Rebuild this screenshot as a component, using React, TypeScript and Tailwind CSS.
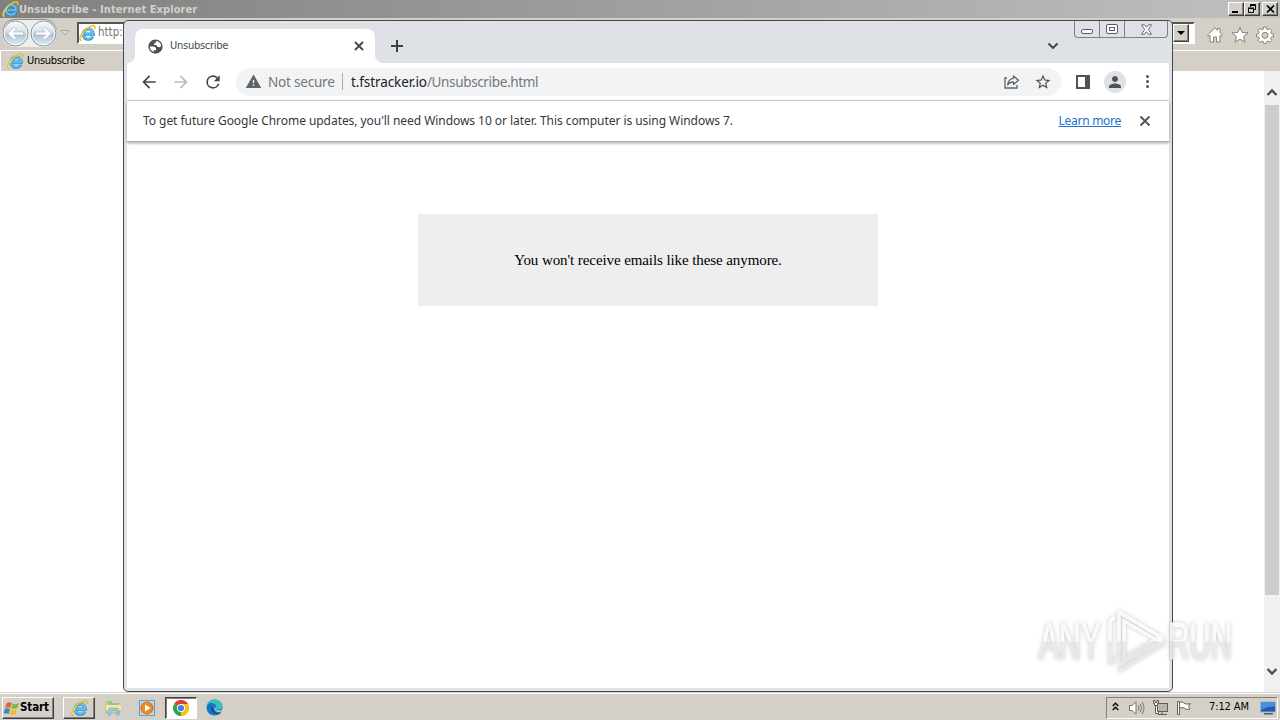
import type { ReactNode } from "react";

const UI = "font-['DejaVu_Sans_Condensed','DejaVu_Sans',sans-serif]";
const SEGOE = "font-['Noto_Sans','Open_Sans',sans-serif]";

function IeIcon({ size = 18 }: { size?: number }) {
  return (
    <svg width={size} height={size} viewBox="0 0 18 18" className="shrink-0">
      <path d="M14.600 12.200A5.400 5.400 0 1 1 15.200 9.700H6" fill="none" stroke="#2f93d3" strokeWidth="3.300" />
      <path d="M14.200 11.900A5.300 5.300 0 1 1 14.900 9.500H6" fill="none" stroke="#6cc8f3" strokeWidth="1.700" />
      <path d="M2.600 16.600C-.4 15.500 1.600 9.600 6.400 5.400 10.600 1.600 15.500-.4 16.600 1.800c.4.800.1 1.800-.4 2.700" fill="none" stroke="#eabb2a" strokeWidth="1.700" />
      <path d="M2.400 15.800C.6 14.500 2.800 9.600 6.800 6" fill="none" stroke="#fbe36a" strokeWidth=".9" />
    </svg>
  );
}

function Mat({ d, size = 20, color = "#5f6368" }: { d: string; size?: number; color?: string }) {
  return (
    <svg width={size} height={size} viewBox="0 0 24 24" fill={color} className="shrink-0">
      <path d={d} />
    </svg>
  );
}

function ClassicButton({ children }: { children: ReactNode }) {
  return (
    <div className="flex h-[14px] w-4 items-center justify-center border border-t-white border-r-[#404040] border-b-[#404040] border-l-white bg-[#d4d0c8] shadow-[inset_-1px_-1px_0_#808080]">
      {children}
    </div>
  );
}

function NavArrow({ flip = false }: { flip?: boolean }) {
  return (
    <svg width="27" height="27" viewBox="0 0 27 27" className={flip ? "-scale-x-100" : ""}>
      <defs>
        <linearGradient id={flip ? "orbB" : "orbA"} x1="0" y1="0" x2="0" y2="1">
          <stop offset="0" stopColor="#fbfcfd" />
          <stop offset=".45" stopColor="#d6dee6" />
          <stop offset=".55" stopColor="#b4c4d2" />
          <stop offset="1" stopColor="#d9f1fb" />
        </linearGradient>
      </defs>
      <circle cx="13.500" cy="13.500" r="12.500" fill={flip ? "url(#orbB)" : "url(#orbA)"} stroke="#8b969f" strokeWidth="1" />
      <circle cx="13.500" cy="13.500" r="11.300" fill="none" stroke="#f5f9fc" strokeWidth="1" />
      <path d="M5.500 13.500l7-6.500 2 2-3 3h10v3h-10l3 3-2 2z" fill="#fff" stroke="#a3b2bf" strokeWidth=".7" />
    </svg>
  );
}

function ExplorerWindow() {
  return (
    <div className="flex h-[692px] flex-col bg-white">
      <div className="flex h-[18px] shrink-0 items-center bg-linear-to-r from-[#808080] to-[#c0c0c0] pr-[2px] pl-[2px]">
        <IeIcon size={17} />
        <span className={`${UI} text-[11px] leading-[17px] font-bold tracking-[0.080px] whitespace-nowrap text-[#d4d0c8]`}>
          Unsubscribe - Internet Explorer
        </span>
        <div className="ml-auto flex">
          <ClassicButton>
            <span className="mt-[6px] mr-[2px] h-[2px] w-[6px] bg-black" />
          </ClassicButton>
          <ClassicButton>
            <svg width="10" height="10" viewBox="0 0 10 10" fill="none" stroke="#000">
              <path d="M3.500 3V.5h5v5H6M3 1.500h6M1.500 4.500h5v4h-5zM1 4h6" />
            </svg>
          </ClassicButton>
          <div className="w-[2px]" />
          <ClassicButton>
            <svg width="9" height="8" viewBox="0 0 9 8" fill="none" stroke="#000" strokeWidth="1.600">
              <path d="M1 .5l7 7M8 .5l-7 7" />
            </svg>
          </ClassicButton>
        </div>
      </div>
      <div className="flex h-8 shrink-0 items-center bg-[#d4d0c8] pb-[2px]">
        <div className="ml-[2px] flex h-[27px] gap-px rounded-full bg-[#eeeeed] shadow-[0_-1px_1px_#85858a]">
          <NavArrow />
          <NavArrow flip />
        </div>
        <svg width="10" height="6" viewBox="0 0 10 6" className="ml-[3px]">
          <path d="M.8.5h8.400L5 5z" fill="#ddd9d2" stroke="#aaa69f" />
        </svg>
        <div className="ml-[7px] flex h-[22px] w-[1118px] items-center border-2 border-t-[#555] border-r-white border-b-white border-l-[#555] bg-white">
          <IeIcon size={17} />
          <span className={`${UI} ml-[2px] text-[11.500px] text-[#777]`}>http:</span>
          <div className="mr-[4px] ml-auto flex h-[18px] w-4 items-center justify-center border border-t-white border-r-[#404040] border-b-[#404040] border-l-white bg-[#d4d0c8] shadow-[inset_-1px_-1px_0_#808080]">
            <span className="h-0 w-0 border-x-4 border-t-4 border-x-transparent border-t-black" />
          </div>
        </div>
        <div className="mt-[4px] ml-[11px] flex gap-[7px]">
          <svg width="18" height="18" viewBox="0 0 18 18" fill="#fff" stroke="#85817b" strokeWidth="1">
            <path d="M1.500 9L9 1.800l2.500 2.400V2.500h2.500v4L16.500 9l-1.300 1.300L14 9.200V16h-3.500v-5h-3v5H4V9.200l-1.200 1.100z" />
          </svg>
          <svg width="18" height="18" viewBox="0 0 18 18" fill="#fff" stroke="#85817b" strokeWidth="1">
            <path d="M9 1.200l2.200 5.300 5.800.4-4.400 3.700 1.400 5.600L9 13.100l-5 3.100 1.400-5.600L1 6.900l5.800-.4z" />
          </svg>
          <svg width="18" height="18" viewBox="0 0 18 18" fill="#fff" stroke="#85817b" strokeWidth="1">
            <path d="M7.600 1h2.800l.4 2.200 1.300.5L14 2.500l1.900 1.900-1.200 1.900.5 1.300 2.200.4v2.800l-2.200.4-.5 1.300 1.200 1.900-1.900 1.900-1.900-1.200-1.300.5-.4 1.800H7.600l-.4-1.800-1.300-.5L4 16.300l-1.900-1.900 1.200-1.900-.5-1.300-2.200-.4V8l2.200-.4.5-1.300L2.100 4.400 4 2.500l1.900 1.200 1.300-.5z" />
            <circle cx="9" cy="9.300" r="3" fill="#d4d0c8" />
          </svg>
        </div>
      </div>
      <div className="flex h-[21px] shrink-0 items-center border-t border-l border-white bg-[#d4d0c8] pl-[6px]">
        <IeIcon size={17} />
        <span className={`${UI} ml-[3px] text-[11px] tracking-[-0.320px] text-black`}>Unsubscribe</span>
      </div>
      <div className="flex min-h-0 flex-1 justify-end">
        <div className="flex w-4 flex-col items-center bg-[#f0f0f0]">
          <div className="flex h-[34px] items-end pb-[8px]">
            <svg width="12" height="9" viewBox="0 0 12 9" fill="none" stroke="#505050" strokeWidth="2.400">
              <path d="M1.500 7L6 2.500 10.500 7" />
            </svg>
          </div>
          <div className="h-[490px] w-[14px] bg-[#cdcdcd]" />
          <svg width="12" height="9" viewBox="0 0 12 9" fill="none" stroke="#505050" strokeWidth="2.400" className="mt-[72px]">
            <path d="M1.500 2L6 6.500 10.500 2" />
          </svg>
        </div>
      </div>
    </div>
  );
}

function CaptionButtons() {
  return (
    <div className="absolute top-0 right-[1px] flex h-[17px] w-[94px] rounded-b-[4px] border border-t-0 border-[#7b8088]">
      <div className="flex w-[25px] items-center justify-center border-r border-[#7b8088]">
        <span className="mt-[5px] h-[5px] w-3 rounded-[2px] border border-[#555b63] bg-white" />
      </div>
      <div className="flex w-[25px] items-center justify-center border-r border-[#7b8088]">
        <span className="flex h-[10px] w-3 items-center justify-center rounded-[2px] border border-[#555b63] bg-white">
          <span className="h-1 w-[6px] border border-[#555b63]" />
        </span>
      </div>
      <div className="flex flex-1 items-center justify-center">
        <svg width="13" height="11" viewBox="0 0 13 11" fill="#fff" stroke="#555b63" strokeWidth=".9">
          <path d="M1.500.8h3l2 2.500L8.500.8h3L8.300 5.500l3.200 4.700h-3l-2-2.500-2 2.500h-3l3.200-4.700z" />
        </svg>
      </div>
    </div>
  );
}

function TabStrip() {
  return (
    <div className="relative flex h-[42px] shrink-0 items-end bg-[#dee1e6] pl-[8px]">
      <div className="relative flex h-[34px] w-[240px] items-center rounded-t-[8px] bg-white pr-[10px] pl-[12px]">
        <div className="absolute bottom-0 -left-[8px] h-2 w-2 bg-[radial-gradient(circle_at_0_0,#dee1e6_7.500px,#fff_8.500px)]" />
        <div className="absolute -right-[8px] bottom-0 h-2 w-2 bg-[radial-gradient(circle_at_100%_0,#dee1e6_7.500px,#fff_8.500px)]" />
        <Mat size={17} color="#4d5156" d="M12 2C6.480 2 2 6.480 2 12s4.480 10 10 10 10-4.480 10-10S17.520 2 12 2zM4 12h4.400c3.407.022 4.922 1.730 4.543 5.127H9.488v2.470a8.004 8.004 0 0 1-5.480-7.597zm16 0c0-.311-.018-.618-.052-.920C19.540 12.360 18.500 13 16.830 13c-2.240 0-3.350-1-3.350-3h-3.540c-.280-2 .460-3 2.220-3 0-1.600.6-2.400 1.800-2.770A8 8 0 0 1 20 12z" />
        <span className={`${UI} mt-[1px] ml-[6px] text-[11px] tracking-[-0.260px] text-[#45494d]`}>Unsubscribe</span>
        <svg width="12" height="12" viewBox="0 0 12 12" className="ml-auto" stroke="#45494d" strokeWidth="1.900">
          <path d="M2 2l8 8M10 2l-8 8" />
        </svg>
      </div>
      <svg width="14" height="14" viewBox="0 0 14 14" className="mb-[10px] ml-[15px]" stroke="#3c4043" strokeWidth="2">
        <path d="M7 1v12M1 7h12" />
      </svg>
      <svg width="12" height="8" viewBox="0 0 12 8" fill="none" stroke="#3c4043" strokeWidth="1.900" className="mr-[110px] mb-[13px] ml-auto">
        <path d="M1.500 1.500L6 6l4.500-4.500" />
      </svg>
      <CaptionButtons />
    </div>
  );
}

function Toolbar() {
  return (
    <div className="flex h-[38px] shrink-0 items-center border-b border-[#d5d7da] bg-white pl-[12px]">
      <Mat d="M20 11H7.830l5.590-5.590L12 4l-8 8 8 8 1.410-1.410L7.830 13H20v-2z" color="#44484c" />
      <div className="w-3" />
      <Mat d="M12 4l-1.410 1.410L16.170 11H4v2h12.170l-5.580 5.590L12 20l8-8z" color="#babcbe" />
      <div className="w-3" />
      <Mat d="M17.650 6.350A7.958 7.958 0 0 0 12 4a8 8 0 1 0 7.730 10h-2.080A6 6 0 1 1 12 6c1.660 0 3.140.69 4.220 1.780L13 11h7V4l-2.350 2.350z" color="#44484c" />
      <div className="ml-[13px] flex h-7 w-[825px] items-center rounded-full bg-[#f1f3f4] pr-[9px] pl-[9px]">
        <Mat size={17} d="M1 21h22L12 2 1 21zm12-3h-2v-2h2v2zm0-4h-2v-4h2v4z" />
        <span className={`${SEGOE} mt-[1px] ml-[6px] w-[67px] text-[13.500px] tracking-[-0.200px] whitespace-nowrap text-[#73777b]`}>Not secure</span>
        <span className="ml-[7px] h-[17px] w-px bg-[#a8abaf]" />
        <span className={`${SEGOE} mt-[1px] ml-[8px] text-[13.500px] tracking-[-0.100px] whitespace-nowrap text-[#202124]`}>
          t.fstracker.io<span className="tracking-[-0.360px] text-[#73777b]">/Unsubscribe.html</span>
        </span>
        <svg width="18" height="16" viewBox="0 0 18 16" fill="none" stroke="#5f6368" strokeWidth="1.300" className="ml-auto">
          <path d="M4 4H2v10h12v-3" />
          <path d="M10.500 2l5 4.200-5 4.200V8C7.500 8 5.800 9 4.700 11c.3-3.600 2.300-6.200 5.800-6.600z" strokeLinejoin="round" />
        </svg>
        <div className="w-[13px]" />
        <Mat size={18} color="#505459" d="M22 9.240l-7.190-.62L12 2 9.190 8.630 2 9.240l5.460 4.730L5.820 21 12 17.270 18.180 21l-1.630-7.030L22 9.240zM12 15.400l-3.760 2.270 1-4.280-3.320-2.880 4.380-.38L12 6.100l1.710 4.040 4.380.38-3.320 2.880 1 4.280L12 15.400z" />
      </div>
      <svg width="14" height="14" viewBox="0 0 14 14" className="ml-[15px]">
        <path d="M0 0h14v14H0zM2 2v10h7V2z" fill="#505459" fillRule="evenodd" />
      </svg>
      <div className="ml-[14px] flex h-[22px] w-[22px] items-center justify-center rounded-full bg-[#dee1e6]">
        <Mat size={18} color="#505459" d="M12 12c2.210 0 4-1.790 4-4s-1.790-4-4-4-4 1.790-4 4 1.790 4 4 4zm0 2c-2.670 0-8 1.340-8 4v2h16v-2c0-2.660-5.330-4-8-4z" />
      </div>
      <div className="ml-[20px] flex flex-col gap-[2px]">
        <span className="h-[3px] w-[3px] rounded-full bg-[#505459]" />
        <span className="h-[3px] w-[3px] rounded-full bg-[#505459]" />
        <span className="h-[3px] w-[3px] rounded-full bg-[#505459]" />
      </div>
    </div>
  );
}

function ChromeWindow() {
  return (
    <div className="absolute top-[20px] left-[123px] flex h-[672px] w-[1050px] flex-col rounded-[5px] border border-[#46484b] bg-[#dee1e6] px-[3px] pb-[3px]">
      <TabStrip />
      <Toolbar />
      <div className="relative z-10 flex h-[41px] shrink-0 items-center border-b border-[#b4b5b7] bg-white pr-[18px] pl-[16px] shadow-[0_1px_3px_#999]">
        <span className={`${SEGOE} text-[12px] tracking-[-0.053px] whitespace-nowrap text-[#36383c]`}>
          To get future Google Chrome updates, you'll need Windows 10 or later. This computer is using Windows 7.
        </span>
        <span className={`${SEGOE} ml-auto text-[12px] tracking-[-0.280px] whitespace-nowrap text-[#2371d2] underline`}>Learn more</span>
        <svg width="12" height="12" viewBox="0 0 12 12" className="ml-[18px]" stroke="#505459" strokeWidth="1.900">
          <path d="M1.500 1.500l9 9M10.500 1.500l-9 9" />
        </svg>
      </div>
      <div className="flex flex-1 items-start justify-center bg-white pt-[72px]">
        <div className="flex h-[92px] w-[460px] items-center justify-center bg-[#eee]">
          <span className="mt-[1px] font-['Liberation_Serif',serif] text-[15px] tracking-[-0.090px] whitespace-nowrap text-black">
            You won't receive emails like these anymore.
          </span>
        </div>
      </div>
    </div>
  );
}

function Taskbar() {
  return (
    <div className="flex h-7 items-center border-t border-[#d4d0c8] bg-[#d4d0c8] pr-[2px] pl-[2px] shadow-[inset_0_1px_0_#fff]">
      <div className="mt-[3px] flex h-[22px] w-[52px] items-center border border-t-white border-r-[#404040] border-b-[#404040] border-l-white pl-px shadow-[inset_-1px_-1px_0_#808080]">
        <svg width="16" height="15" viewBox="0 0 16 15">
          <path d="M2.500 2.500Q5 .5 7.700 2L6.300 7Q4 5.700 1 7z" fill="#e8602c" />
          <path d="M8.700 2.500q3 1.500 6.300-.5l-1.600 5q-3 1.500-6 .3z" fill="#7eb83c" />
          <path d="M.8 8Q3.500 6.600 6 8l-1.400 5Q2.500 11.500-.5 13z" fill="#3c87cc" />
          <path d="M7 8.400q3 1.300 6-.3l-1.500 5q-3 1.600-6 .3z" fill="#f3bd27" />
        </svg>
        <span className={`${UI} text-[11.500px] font-bold tracking-[-0.100px] text-black`}>Start</span>
      </div>
      <div className="mt-[3px] ml-[9px] flex h-[22px] w-8 items-center justify-center border border-t-white border-r-[#404040] border-b-[#404040] border-l-white shadow-[inset_-1px_-1px_0_#808080]">
        <IeIcon size={17} />
      </div>
      <svg width="17" height="17" viewBox="0 0 17 17" className="mt-[2px] ml-[10px]">
        <path d="M1 3h5l1 1.500h8V14H1z" fill="#ecd27c" stroke="#c9a94d" strokeWidth=".7" />
        <path d="M3 2h4v2h6v3H3z" fill="#8ccb8b" />
        <path d="M1 6h15v5H1z" fill="#f9e8a0" />
        <path d="M3 16v-4q0-3 3-3h5q3 0 3 3v4h-2.500v-3q0-1.500-1.500-1.500H7Q5.500 11.500 5.500 13v3z" fill="#8ed0ef" stroke="#5aa5d0" strokeWidth=".6" />
      </svg>
      <svg width="16" height="16" viewBox="0 0 16 16" className="mt-[2px] ml-[17px]">
        <rect x=".5" y=".5" width="15" height="15" fill="#b7d5ec" stroke="#6c9bc2" />
        <circle cx="8" cy="8" r="6" fill="#f08a1c" stroke="#d86c0c" />
        <path d="M6 4.500L11.500 8 6 11.500z" fill="#fff" />
      </svg>
      <div className="mt-[3px] ml-[10px] flex h-[22px] w-8 items-center justify-center border border-t-[#404040] border-r-white border-b-white border-l-[#404040] bg-white pb-px shadow-[inset_1px_1px_0_#808080]">
        <svg width="16" height="16" viewBox="0 0 16 16">
          <path d="M8 8L1.070 4A8 8 0 0 1 14.930 4z" fill="#e33b2e" />
          <path d="M8 8l6.930-4A8 8 0 0 1 8 16z" fill="#fbc116" />
          <path d="M8 8v8A8 8 0 0 1 1.070 4z" fill="#2da44e" />
          <path d="M8 4h6.930A8 8 0 0 1 8 16l3.500-6z" fill="#fbc116" />
          <circle cx="8" cy="8" r="4" fill="#fff" />
          <circle cx="8" cy="8" r="3.100" fill="#3f7fe8" />
        </svg>
      </div>
      <svg width="17" height="17" viewBox="0 0 17 17" className="mt-[2px] ml-[9px]">
        <circle cx="8.500" cy="8.500" r="8" fill="#1477c5" />
        <path d="M.6 7.500C1.500 2.500 5 .5 8.500.5c5 0 8 3.300 8 6.300 0 2.500-2 4-4.500 4-1.500 0-2.500-.5-2.500-1.200 0-.6.700-.8.700-2.100C10.200 5.300 7.500 4 5 4 3 4 1.500 5.500.6 7.500z" fill="#38c2b8" />
        <path d="M6 7.500c-2 3.500 1 8 6.500 7.700 1.200 0 2-.6 2.500-1-3 1-7.500-.2-7.500-4.500z" fill="#0b4c94" />
        <path d="M9.500 7.500c-1 2.600.8 4 3 4 1.700 0 2.700-.5 3.500-1l-.8 2c-3 1.400-7.200-.3-6.700-4z" fill="#d4d0c8" />
      </svg>
      <div className="mt-[3px] ml-auto flex h-[22px] w-[172px] items-center border border-t-[#808080] border-r-white border-b-white border-l-[#808080] pr-[1px] pb-px pl-[5px]">
        <svg width="7" height="9" viewBox="0 0 7 9" fill="none" stroke="#000" strokeWidth="1.300" className="mb-[3px]">
          <path d="M.7 4l2.800-2.800L6.300 4M.7 8l2.800-2.800L6.300 8" />
        </svg>
        <svg width="17" height="16" viewBox="0 0 17 16" className="ml-[9px]" fill="none" stroke="#77736d">
          <path d="M1.500 5.500H4L8 1.800v12.400L4 10.500H1.500z" fill="#fff" />
          <path d="M10.300 5.500q1.500 2.500 0 5M12.300 3.800q2.500 4.200 0 8.400M14.300 2.200q3.400 5.800 0 11.600" />
        </svg>
        <svg width="17" height="16" viewBox="0 0 17 16" className="ml-[7px]" stroke="#5f5c58">
          <rect x="4.500" y="3.500" width="11" height="8" fill="#b9b6b0" />
          <path d="M6 14.500h9M10 12v2" />
          <path d="M1.500.5v3h1v2h3v-2h1v-3h-1.500v2h-2v-2zM3.500 5.500v8h3v-2h-1v-6z" fill="#fff" />
        </svg>
        <svg width="16" height="16" viewBox="0 0 16 16" className="ml-[7px]" fill="#fff" stroke="#65615c">
          <path d="M1.500 1.500h2v13h-2zM3.500 2.500c2-1 3.500-.5 4.500.5s4 1.500 6.500.5l-2 3 1.500 2.500c-2 .8-4 .5-5.500-.7S5 7.500 3.500 8.500z" />
        </svg>
        <span className={`${UI} ml-[17px] text-[11px] tracking-[-0.120px] whitespace-nowrap text-black`}>7:12 AM</span>
        <svg width="16" height="14" viewBox="0 0 16 14" className="ml-auto">
          <path d="M.5 1h15v10H.5z" fill="#1d58ac" stroke="#93b4d9" />
          <path d="M1 1.500h14v4Q8 5 1 9z" fill="#4a8edb" />
          <path d="M4 12h9v1.500H4z" fill="#4d5c70" />
        </svg>
      </div>
    </div>
  );
}

function Watermark() {
  return (
    <svg width="220" height="70" viewBox="0 0 220 70" className="pointer-events-none absolute top-[606px] left-[1036px] z-20 drop-shadow-[0_0_2px_rgba(0,0,0,0.25)]">
      <defs>
        <linearGradient id="mark" x1="0" y1="0" x2="0" y2="68" gradientUnits="userSpaceOnUse">
          <stop offset=".51" stopColor="#fff" stopOpacity=".85" />
          <stop offset=".53" stopColor="#ebebeb" stopOpacity=".85" />
          <stop offset="1" stopColor="#ebebeb" stopOpacity=".85" />
        </linearGradient>
      </defs>
      <g fill="url(#mark)" stroke="url(#mark)" strokeWidth=".8" fontFamily="'Liberation Sans Narrow','Liberation Sans',sans-serif" fontSize="51">
        <text x="3" y="53" textLength="62" lengthAdjust="spacingAndGlyphs">ANY</text>
        <text x="132" y="53" textLength="64" lengthAdjust="spacingAndGlyphs">RUN</text>
      </g>
      <g fill="none" stroke="url(#mark)" strokeWidth="3.500" strokeLinejoin="round" strokeLinecap="round">
        <path d="M78 12l-4 3v42l6-4" />
        <path d="M83 52V6l43 26-2 4-36-21v38l37-23" />
        <path d="M84 59l41-24M84 64l44-27" />
      </g>
    </svg>
  );
}

export default function App() {
  return (
    <div className="relative h-[720px] w-[1280px] overflow-hidden bg-[#d4d0c8]">
      <ExplorerWindow />
      <Taskbar />
      <ChromeWindow />
      <Watermark />
    </div>
  );
}
